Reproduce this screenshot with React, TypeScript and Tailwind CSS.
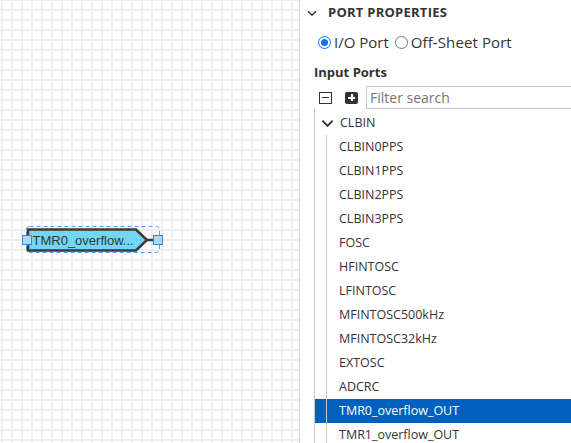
import React from "react";

const items = [
  "CLBIN0PPS",
  "CLBIN1PPS",
  "CLBIN2PPS",
  "CLBIN3PPS",
  "FOSC",
  "HFINTOSC",
  "LFINTOSC",
  "MFINTOSC500kHz",
  "MFINTOSC32kHz",
  "EXTOSC",
  "ADCRC",
  "TMR0_overflow_OUT",
  "TMR1_overflow_OUT",
];

function Chevron({ className }: { className?: string }) {
  return (
    <svg className={className} width="14" height="9" viewBox="0 0 14 9" fill="none">
      <path d="M1.5 1.5 L7 7 L12.5 1.5" stroke="#333" strokeWidth="2" />
    </svg>
  );
}

export default function App() {
  return (
    <div className="w-[571px] h-[443px] overflow-hidden flex bg-white font-['Open_Sans',sans-serif]">
      <div className="relative w-[299px] shrink-0 h-full bg-white bg-[linear-gradient(to_right,#eeeeee_2px,transparent_2px),linear-gradient(to_bottom,#eeeeee_2px,transparent_2px)] bg-[size:10px_10px] bg-[position:1px_-1px]">
        <svg className="absolute left-[20px] top-[224px]" width="146" height="32" viewBox="0 0 146 32">
          <rect x="6.5" y="2.5" width="133" height="26" rx="3" fill="none" stroke="#4f9ef0" strokeWidth="1" strokeDasharray="4 3" />
          <polygon points="8,5.5 116,5.5 127,16 116,26.5 8,26.5" fill="#74d6f6" stroke="#3a3a3a" strokeWidth="2.5" strokeLinejoin="miter" />
          <line x1="127" y1="16" x2="133" y2="16" stroke="#3a3a3a" strokeWidth="2.5" />
          <rect x="133.5" y="11.5" width="9" height="9" fill="#add8e6" stroke="#2b8ce8" strokeWidth="1" />
          <rect x="2.5" y="11.5" width="9" height="9" fill="#add8e6" stroke="#2b8ce8" strokeWidth="1" />
          <text x="12.5" y="21" fontFamily="'Liberation Sans', Arial, sans-serif" fontSize="13" fill="#333">
            TMR0_overflow...
          </text>
        </svg>
      </div>
      <div className="w-[320px] shrink-0 h-full border-l border-[#d4d4d4] text-[#333]">
        <div className="h-[26px] flex items-center pl-[7px] gap-[11px]">
          <Chevron className="w-[10px] h-[7px]" />
          <span className="font-bold text-[13px] tracking-[0.25px]">PORT PROPERTIES</span>
        </div>
        <div className="h-[32px] flex items-center pl-[18px] text-[15px]">
          <span className="w-[13px] h-[13px] rounded-full border border-[#0075ff] flex items-center justify-center">
            <span className="w-[7px] h-[7px] rounded-full bg-[#0075ff]" />
          </span>
          <span className="ml-[3px]">I/O Port</span>
          <span className="ml-[6px] w-[13px] h-[13px] rounded-full border border-[#767676]" />
          <span className="ml-[3px] tracking-[0.1px]">Off-Sheet Port</span>
        </div>
        <div className="h-[28px] flex items-center pl-[14px] pt-[2px] font-bold text-[13px]">Input Ports</div>
        <div className="h-[23px] flex items-stretch pl-[19px]">
          <div className="flex items-center">
            <span className="w-[13px] h-[12px] border border-[#333] flex items-center justify-center">
              <span className="w-[7px] h-[1.5px] bg-[#333]" />
            </span>
          </div>
          <div className="flex items-center ml-[13px]">
            <span className="w-[13px] h-[12px] rounded-[2px] bg-[#333] flex items-center justify-center relative">
              <span className="absolute w-[7px] h-[2px] bg-white" />
              <span className="absolute w-[2px] h-[7px] bg-white" />
            </span>
          </div>
          <div className="ml-[8px] flex-1 border border-[#c8c8c8] flex items-center pl-[3px] text-[14px] text-[#757575]">
            Filter search
          </div>
        </div>
        <div className="ml-[14px] border-l border-[#c8c8c8] text-[12.5px]">
          <div className="h-[26px] flex items-center pl-[6px] pt-[2px]">
            <Chevron className="w-[13px] h-[9px]" />
            <span className="ml-[6px]">CLBIN</span>
          </div>
          <div className="relative">
            <div className="absolute left-[11px] top-0 bottom-0 w-px bg-[#c8c8c8] z-10" />
            {items.map((it) => {
              const sel = it === "TMR0_overflow_OUT";
              return (
                <div
                  key={it}
                  className={
                    sel
                      ? "h-[24px] flex items-center pl-[24px] pt-[1px] bg-[#0060c0] text-white"
                      : "h-[24px] flex items-center pl-[24px] pt-[1px]"
                  }
                >
                  {it}
                </div>
              );
            })}
          </div>
        </div>
      </div>
    </div>
  );
}
